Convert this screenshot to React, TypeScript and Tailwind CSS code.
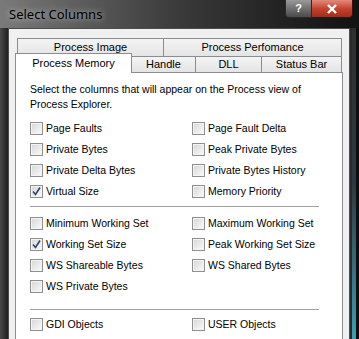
import { Fragment } from 'react';

const rows1: [string, boolean, string, boolean][] = [
  ['Page Faults', false, 'Page Fault Delta', false],
  ['Private Bytes', false, 'Peak Private Bytes', false],
  ['Private Delta Bytes', false, 'Private Bytes History', false],
  ['Virtual Size', true, 'Memory Priority', false],
];

const rows2: [string, boolean, string | null, boolean][] = [
  ['Minimum Working Set', false, 'Maximum Working Set', false],
  ['Working Set Size', true, 'Peak Working Set Size', false],
  ['WS Shareable Bytes', false, 'WS Shared Bytes', false],
  ['WS Private Bytes', false, null, false],
];

function CheckBox({ checked }: { checked: boolean }) {
  return (
    <span className="w-[13px] h-[13px] shrink-0 border border-[#8e8f8f] bg-gradient-to-br from-[#d6d6d6] to-[#fbfbfb] shadow-[inset_0_0_0_1px_#f4f4f4] flex items-center justify-center">
      {checked && (
        <svg width="11" height="11" viewBox="0 0 11 11">
          <path d="M2 5.5 L4.5 8.5 L9 1.5" fill="none" stroke="#2f4273" strokeWidth="1.6" />
        </svg>
      )}
    </span>
  );
}

function Option({ label, checked }: { label: string; checked: boolean }) {
  return (
    <div className="flex items-center gap-[3px] h-[21px]">
      <CheckBox checked={checked} />
      <span>{label}</span>
    </div>
  );
}

export default function App() {
  return (
    <div className="w-[359px] h-[339px] overflow-hidden flex flex-col bg-[#1b1b1b] font-['Liberation_Sans',Arial,sans-serif] text-[11px] text-black">
      {/* Title bar */}
      <div className="h-[28px] shrink-0 flex bg-gradient-to-r from-[#7a7a7a] via-[#3a3a3a] to-[#121212]">
        <span className="pl-[9px] pt-[5px] text-[13px] font-['Noto_Sans',sans-serif] [text-shadow:0_0_6px_rgba(255,255,255,0.7)]">
          Select Columns
        </span>
        <div className="ml-auto mr-[6px] flex h-[18px]">
          <div className="w-[27px] rounded-bl-[4px] border border-t-0 border-[#2a2a2a] bg-gradient-to-b from-[#9a9a9a] to-[#4a4a4a] flex items-center justify-center text-white text-[11px] font-bold">
            ?
          </div>
          <div className="w-[41px] rounded-br-[4px] border border-t-0 border-l-0 border-[#3a1410] bg-gradient-to-b from-[#e08a7a] via-[#c5432f] to-[#a52a18] flex items-center justify-center">
            <svg width="12" height="10" viewBox="0 0 12 10">
              <path d="M2 1 L10 9 M10 1 L2 9" stroke="#fff" strokeWidth="2.4" />
            </svg>
          </div>
        </div>
      </div>

      <div className="flex flex-1 min-h-0">
        {/* left frame */}
        <div className="w-[8px] bg-gradient-to-r from-[#4a4a4a] to-[#202020]" />

        {/* dialog body */}
        <div className="w-[342px] bg-[#f0f0f0] border border-b-0 border-[#4c4c4c] pt-[9px] pl-[6px] pr-[6px] flex flex-col">
          {/* tab row 1 */}
          <div className="flex h-[18px] ml-[2px]">
            <div className="w-[146px] border-t border-l border-[#898c95] bg-gradient-to-b from-[#f4f4f4] to-[#e4e4e4] flex items-center justify-center">
              Process Image
            </div>
            <div className="w-[179px] border-t border-l border-r border-[#898c95] bg-gradient-to-b from-[#f4f4f4] to-[#e4e4e4] flex items-center justify-center">
              Process Perfomance
            </div>
          </div>
          {/* tab row 2 */}
          <div className="flex h-[16px] items-end">
            <div className="relative z-10 w-[117px] h-[20px] -mb-px border-t border-l border-r border-[#898c95] bg-white flex items-center justify-center">
              Process Memory
            </div>
            <div className="w-[64px] h-[16px] border-t border-r border-[#898c95] bg-gradient-to-b from-[#f4f4f4] to-[#e4e4e4] flex items-center justify-center">
              Handle
            </div>
            <div className="w-[66px] h-[16px] border-t border-r border-[#898c95] bg-gradient-to-b from-[#f4f4f4] to-[#e4e4e4] flex items-center justify-center">
              DLL
            </div>
            <div className="w-[80px] h-[16px] border-t border-r border-[#898c95] bg-gradient-to-b from-[#f4f4f4] to-[#e4e4e4] flex items-center justify-center">
              Status Bar
            </div>
          </div>

          {/* panel */}
          <div className="flex-1 w-[328px] border border-b-0 border-[#898c95] bg-white pl-[14px] pt-[9px] text-[10.5px]">
            <p className="leading-[15px]">
              Select the columns that will appear on the Process view of
              <br />
              Process Explorer.
            </p>

            <div className="mt-[6px] grid grid-cols-[162px_162px]">
              {rows1.map(([a, ac, b, bc]) => (
                <Fragment key={a}>
                  <Option label={a} checked={ac} />
                  <Option label={b} checked={bc} />
                </Fragment>
              ))}
            </div>

            <div className="mt-[4px] w-[289px] h-px bg-[#a0a0a0]" />

            <div className="mt-[6px] grid grid-cols-[162px_162px]">
              {rows2.map(([a, ac, b, bc]) => (
                <Fragment key={a}>
                  <Option label={a} checked={ac} />
                  {b ? <Option label={b} checked={bc} /> : <div />}
                </Fragment>
              ))}
            </div>

            <div className="mt-[12px] w-[289px] h-px bg-[#a0a0a0]" />

            <div className="mt-[4px] grid grid-cols-[162px_162px]">
              <Option label="GDI Objects" checked={false} />
              <Option label="USER Objects" checked={false} />
            </div>
          </div>
        </div>

        {/* right frame */}
        <div className="w-[9px] flex">
          <div className="w-[2px] bg-[#2a2a2a]" />
          <div className="w-[4px] bg-gradient-to-b from-[#2e2e2e] via-[#2a3a40] to-[#3aa0b8]" />
          <div className="flex-1 bg-[#0e0e0e]" />
        </div>
      </div>
    </div>
  );
}
